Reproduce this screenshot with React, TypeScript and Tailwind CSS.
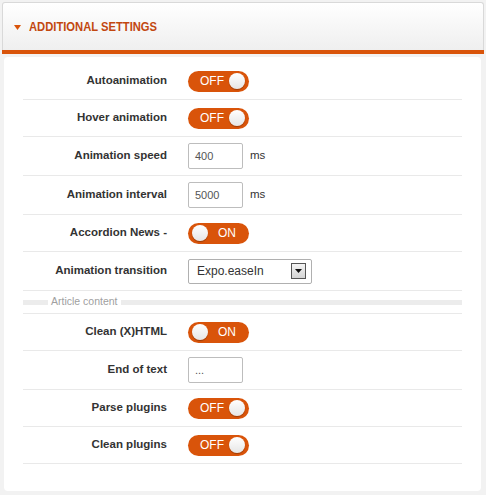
import React from "react";

type Row =
  | { kind: "toggle"; label: string; on: boolean }
  | { kind: "input"; label: string; value: string; unit?: string }
  | { kind: "select"; label: string; value: string };

const topRows: Row[] = [
  { kind: "toggle", label: "Autoanimation", on: false },
  { kind: "toggle", label: "Hover animation", on: false },
  { kind: "input", label: "Animation speed", value: "400", unit: "ms" },
  { kind: "input", label: "Animation interval", value: "5000", unit: "ms" },
  { kind: "toggle", label: "Accordion News -", on: true },
  { kind: "select", label: "Animation transition", value: "Expo.easeIn" },
];

const bottomRows: Row[] = [
  { kind: "toggle", label: "Clean (X)HTML", on: true },
  { kind: "input", label: "End of text", value: "..." },
  { kind: "toggle", label: "Parse plugins", on: false },
  { kind: "toggle", label: "Clean plugins", on: false },
];

const Toggle: React.FC<{ on: boolean }> = ({ on }) => (
  <div className="flex items-center w-[61px] h-[21px] rounded-full bg-[#d9540a] px-[4px]">
    {on ? (
      <>
        <span className="w-[16px] h-[16px] rounded-full bg-gradient-to-b from-white to-[#e6e6e6] shadow-[0_1px_1px_rgba(0,0,0,0.3)]" />
        <span className="ml-[10px] text-[12px] text-white leading-none">ON</span>
      </>
    ) : (
      <>
        <span className="ml-[8px] text-[12px] text-white leading-none">OFF</span>
        <span className="ml-auto w-[16px] h-[16px] rounded-full bg-gradient-to-b from-white to-[#e6e6e6] shadow-[0_1px_1px_rgba(0,0,0,0.3)]" />
      </>
    )}
  </div>
);

const SettingRow: React.FC<{ row: Row }> = ({ row }) => {
  const tall = row.kind !== "toggle";
  return (
    <div
      className={`flex items-center border-b border-[#e9e9e9] ${
        tall ? "h-[39px]" : "h-[37px]"
      }`}
    >
      <div className="w-[144px] text-right text-[11.5px] font-bold text-[#333]">
        {row.label}
      </div>
      <div className="ml-[21px] flex items-center">
        {row.kind === "toggle" && <Toggle on={row.on} />}
        {row.kind === "input" && (
          <>
            <div className="w-[55px] h-[26px] border border-[#bdbdbd] rounded-[2px] flex items-center pl-[6px] text-[11px] text-[#555]">
              {row.value}
            </div>
            {row.unit && (
              <span className="ml-[7px] text-[11.5px] text-[#333]">{row.unit}</span>
            )}
          </>
        )}
        {row.kind === "select" && (
          <div className="w-[124px] h-[25px] border border-[#b0b0b0] rounded-[2px] flex items-center pl-[8px] pr-[5px] text-[12px] text-[#333]">
            <span>{row.value}</span>
            <span className="ml-auto w-[15px] h-[16px] border border-[#555] bg-gradient-to-b from-[#f4f4f4] to-[#d4d4d4] flex items-center justify-center">
              <svg width="7" height="4" viewBox="0 0 7 4">
                <path d="M0 0h7L3.5 4z" fill="#111" />
              </svg>
            </span>
          </div>
        )}
      </div>
    </div>
  );
};

export default function App() {
  return (
    <div
      className="w-[486px] h-[495px] bg-[#f2f2f2] pt-[2px]"
      style={{ fontFamily: '"Liberation Sans", Arial, sans-serif' }}
    >
      {/* Header */}
      <div className="mx-[2px] rounded-t-[3px] border border-b-0 border-[#d9d9d9] bg-gradient-to-b from-white to-[#efefef] h-[48px] flex items-center pl-[11px]">
        <svg width="7" height="5" viewBox="0 0 7 5" className="mt-[1px]">
          <path d="M0 0h7L3.5 5z" fill="#d9540a" />
        </svg>
        <span className="ml-[8px] mt-[1px] text-[13.5px] font-bold uppercase text-[#c2470f] scale-x-[0.83] origin-left whitespace-nowrap">
          Additional settings
        </span>
      </div>
      <div className="mx-[2px] h-[4px] bg-[#d9540a]" />

      {/* Content card */}
      <div className="mx-[4px] mt-[3px] w-[477px] bg-white rounded-[4px] px-[19px] pt-[6px] pb-[27px]">
        {topRows.map((r) => (
          <SettingRow key={r.label} row={r} />
        ))}

        <div className="flex items-center h-[23px] border-b border-[#e9e9e9]">
          <div className="w-[25px] h-[5px] bg-[#ececec]" />
          <span className="px-[3px] text-[10.5px] text-[#a0a0a0] leading-none -mt-[2px]">
            Article content
          </span>
          <div className="flex-1 h-[5px] bg-[#ececec]" />
        </div>

        {bottomRows.map((r) => (
          <SettingRow key={r.label} row={r} />
        ))}
      </div>
    </div>
  );
}
